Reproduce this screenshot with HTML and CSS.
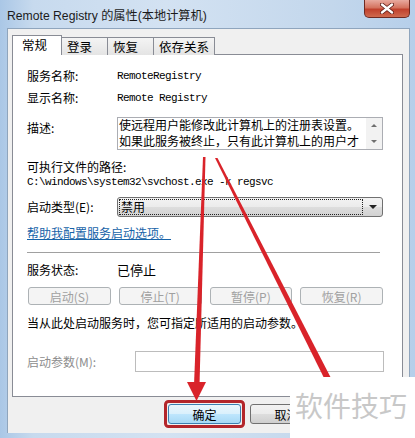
FILE: index.html
```html
<!DOCTYPE html>
<html lang="zh-CN">
<head>
  <meta charset="UTF-8">
  <title>Remote Registry 的属性(本地计算机)</title>
  <link rel="stylesheet" href="styles.css">
</head>
<body>
  <div class="window">
    <div class="titlebar">
      <span class="title">Remote Registry 的属性(本地计算机)</span>
      <span class="close">
        <svg width="14" height="11" viewBox="0 0 14 11">
          <path d="M2 1.5 L12 9.5 M12 1.5 L2 9.5" stroke="#5a1a14" stroke-width="4" stroke-linecap="round"/>
          <path d="M2 1.5 L12 9.5 M12 1.5 L2 9.5" stroke="#fff" stroke-width="2.4" stroke-linecap="round"/>
        </svg>
      </span>
    </div>

    <div class="client">
      <div class="tabs">
        <div class="tab active">常规</div>
        <div class="tab">登录</div>
        <div class="tab">恢复</div>
        <div class="tab">依存关系</div>
      </div>

      <div class="panel">
        <div class="row">
          <span class="label">服务名称:</span>
          <span class="mono">RemoteRegistry</span>
        </div>
        <div class="row gap-6">
          <span class="label">显示名称:</span>
          <span class="mono">Remote Registry</span>
        </div>
        <div class="row desc-row">
          <span class="label desc-label">描述:</span>
          <div class="desc-box">
            <div class="desc-text">
              <div class="desc-line">使远程用户能修改此计算机上的注册表设置。</div>
              <div class="desc-line">如果此服务被终止，只有此计算机上的用户才</div>
            </div>
            <div class="scrollbar">
              <span class="scroll-arrow up"></span>
              <span class="scroll-arrow down"></span>
            </div>
          </div>
        </div>
        <div class="exec-label">可执行文件的路径:</div>
        <div class="mono path">C:\windows\system32\svchost.exe -k regsvc</div>
        <div class="row startup-row">
          <span class="label">启动类型(E):</span>
          <div class="select">
            <span class="select-value">禁用</span>
            <span class="select-arrow"></span>
          </div>
        </div>
        <a class="help-link" href="#">帮助我配置服务启动选项。</a>
        <div class="separator"></div>
        <div class="row status-row">
          <span class="label">服务状态:</span>
          <span class="status">已停止</span>
        </div>
        <div class="svc-buttons">
          <span class="btn disabled">启动(S)</span>
          <span class="btn disabled">停止(T)</span>
          <span class="btn disabled">暂停(P)</span>
          <span class="btn disabled">恢复(R)</span>
        </div>
        <div class="hint">当从此处启动服务时，您可指定所适用的启动参数。</div>
        <div class="row params-row">
          <span class="label muted params-label">启动参数(M):</span>
          <div class="params-input"></div>
        </div>
      </div>

      <div class="actions">
        <span class="btn default">确定</span>
        <span class="btn">取消</span>
      </div>
    </div>

    <!-- annotation arrows drawn over the dialog -->
    <svg class="arrows" width="415" height="438" viewBox="0 0 415 438">
      <polygon points="203,157 205.5,157 199.5,385 194,385" fill="#d9232a"/>
      <polygon points="187,382 206,382 196.5,401" fill="#d9232a"/>
      <polygon points="215,158 217.5,158 333,382 326,382" fill="#d9232a"/>
      <rect x="165.5" y="401.5" width="78" height="25" rx="3" fill="none" stroke="#b3262b" stroke-width="3"/>
    </svg>

    <div class="watermark">软件技巧</div>
  </div>
</body>
</html>
```

FILE: styles.css
```css
body {
  margin: 0;
  font-family: "Noto Sans CJK SC", sans-serif;
  font-size: 12px;
  color: #000;
  background: #bcd3ea;
}

.window {
  position: relative;
  width: 415px;
  height: 438px;
  overflow: hidden;
  background: linear-gradient(to right, #aac7e6, #c7daee 8%, #d3e2f2 40%, #c3d7ec 80%, #b6cfea);
}

.titlebar {
  height: 28px;
  display: flex;
  align-items: flex-start;
}

.title {
  margin: 8px 0 0 7px;
  font-family: "Liberation Sans", "Noto Sans CJK SC", sans-serif;
  font-size: 12.2px;
  line-height: 16px;
  color: #1b1b1b;
}

.close {
  margin-left: auto;
  margin-right: 5px;
  width: 46px;
  height: 18px;
  box-sizing: border-box;
  border: 1px solid #6e2a22;
  border-top: none;
  border-radius: 0 0 5px 5px;
  background: linear-gradient(to bottom, #e8aa9f, #d4735f 45%, #c0412d 55%, #cf6a4f);
  display: flex;
  justify-content: center;
  align-items: center;
}

.client {
  margin: 0 5px 0 7px;
  height: 405px;
  box-sizing: border-box;
  padding: 6px 6px 0 4px;
  background: #f0f0f0;
  border: 1px solid #8fa5bd;
  border-bottom: none;
}

/* tab strip */
.tabs {
  display: flex;
  align-items: flex-end;
  height: 20px;
  position: relative;
  z-index: 1;
}

.tab {
  height: 18px;
  min-width: 47px;
  box-sizing: border-box;
  padding: 0 5px;
  margin-left: -1px;
  border: 1px solid #898c95;
  border-bottom: none;
  background: linear-gradient(to bottom, #f4f4f4, #e4e4e4);
  font-size: 12.5px;
  line-height: 17px;
}

.tab.active {
  height: 20px;
  width: 50px;
  margin-left: 0;
  padding-left: 9px;
  background: #fff;
  line-height: 18px;
  position: relative;
  z-index: 2;
}

.panel {
  margin-top: -1px;
  width: 391px;
  height: 343px;
  box-sizing: border-box;
  padding: 13px 0 0 14px;
  border: 1px solid #898c95;
  background: #fff;
  display: flex;
  flex-direction: column;
  align-items: flex-start;
}

.row {
  display: flex;
  align-items: center;
  line-height: 16px;
}

.label {
  width: 90px;
  flex-shrink: 0;
}

.muted {
  color: #8d8d8d;
}

.mono {
  font-family: "Liberation Mono", monospace;
  font-size: 11px;
  letter-spacing: -0.6px;
}

.gap-6 {
  margin-top: 6px;
}

.desc-row {
  margin-top: 11px;
  align-items: flex-start;
}

.desc-label {
  margin-top: 3px;
}

.desc-box {
  width: 266px;
  height: 33px;
  box-sizing: border-box;
  border: 1px solid #abadb3;
  display: flex;
}

.desc-text {
  flex: 1;
  padding-left: 1px;
  margin-top: -1px;
  white-space: nowrap;
}

.desc-line {
  line-height: 16px;
}

.scrollbar {
  width: 16px;
  background: #f2f2f2;
  display: flex;
  flex-direction: column;
  justify-content: space-around;
  align-items: center;
}

.scroll-arrow {
  width: 0;
  height: 0;
  border-left: 3px solid transparent;
  border-right: 3px solid transparent;
}

.scroll-arrow.up {
  border-bottom: 3px solid #6f6f6f;
}

.scroll-arrow.down {
  border-top: 3px solid #6f6f6f;
}

.exec-label {
  margin-top: 9px;
  line-height: 16px;
}

.path {
  line-height: 14px;
}

.startup-row {
  margin-top: 8px;
}

.select {
  width: 266px;
  height: 20px;
  box-sizing: border-box;
  border: 1px solid #707070;
  border-radius: 3px;
  background: linear-gradient(to bottom, #f3f3f3, #ebebeb 50%, #dddddd 51%, #d2d2d2);
  display: flex;
  align-items: center;
}

.select-value {
  flex: 1;
  margin: 0 0 0 1px;
  height: 16px;
  box-sizing: border-box;
  border: 1px dotted #222;
  line-height: 14px;
  padding-left: 1px;
}

.select-arrow {
  width: 19px;
  display: flex;
  justify-content: center;
}

.select-arrow::before {
  content: "";
  border-left: 4px solid transparent;
  border-right: 4px solid transparent;
  border-top: 4px solid #222;
}

.help-link {
  margin-top: 8px;
  line-height: 16px;
  color: #1763a8;
  text-decoration: underline;
}

.separator {
  margin-top: 11px;
  width: 353px;
  height: 1px;
  background: #a0a0a0;
  border-bottom: 1px solid #fff;
}

.status-row {
  margin-top: 8px;
}

.status {
  font-size: 13px;
}

.svc-buttons {
  margin: 9px 0 0 1px;
  width: 355px;
  display: grid;
  grid-template-columns: repeat(4, 1fr);
  gap: 8px;
}

.btn {
  height: 20px;
  box-sizing: border-box;
  border: 1px solid #707070;
  border-radius: 3px;
  background: linear-gradient(to bottom, #f2f2f2, #ebebeb 50%, #dddddd 51%, #cfcfcf);
  display: flex;
  justify-content: center;
  align-items: center;
}

.btn.disabled {
  height: 18px;
  border-color: #adb2b5;
  background: #f4f4f4;
  color: #a0a0a0;
}

.hint {
  margin-top: 10px;
  line-height: 16px;
}

.params-row {
  margin-top: 20px;
}

.params-label {
  width: 108px;
}

.params-input {
  width: 249px;
  height: 21px;
  box-sizing: border-box;
  border: 1px solid #bcbcbc;
  background: #fff;
}

.actions {
  margin: 7px 0 0 156px;
  display: flex;
  gap: 9px;
}

.actions .btn {
  width: 73px;
}

.btn.default {
  border-color: #3c7fb1;
  background: linear-gradient(to bottom, #eaf6fd, #d9f0fc 50%, #bee6fd 51%, #a7d9f5);
}

.arrows {
  position: absolute;
  top: 0;
  left: 0;
  pointer-events: none;
}

.watermark {
  position: absolute;
  left: 290px;
  top: 377px;
  width: 125px;
  height: 61px;
  background: #fff;
  color: #c8c8c8;
  font-size: 28px;
  line-height: 56px;
  padding-left: 5px;
  box-sizing: border-box;
  white-space: nowrap;
}
```
